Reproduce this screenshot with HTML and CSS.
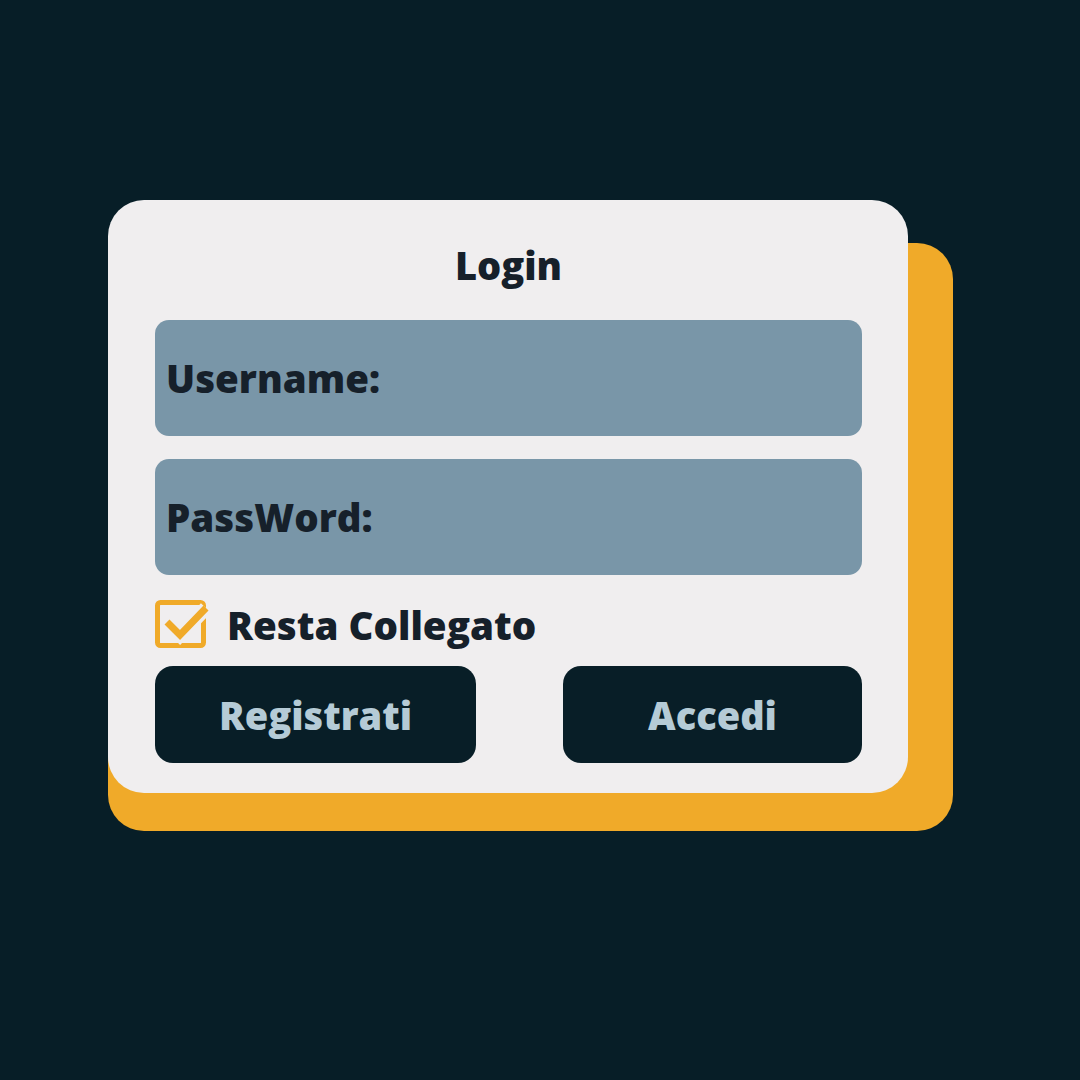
FILE: index.html
```html
<!DOCTYPE html>
<html lang="it">
<head>
<meta charset="utf-8">
<title>Login</title>
<link rel="stylesheet" href="styles.css">
</head>
<body>
<main class="stage">
  <div class="card-wrap">
    <section class="card">
      <h1 class="title">Login</h1>
      <div class="field"><span class="label">Username:</span></div>
      <div class="field"><span class="label">PassWord:</span></div>
      <label class="remember">
        <svg class="check" width="54" height="50" viewBox="0 0 54 50" aria-hidden="true">
          <rect x="2.5" y="2.5" width="46" height="43" rx="3" fill="none" stroke="#f0aa29" stroke-width="5"/>
          <path d="M12 22 L25 35 L51 8" fill="none" stroke="#f0eeef" stroke-width="14" stroke-linejoin="miter"/>
          <path d="M12 22 L25 35 L51 8" fill="none" stroke="#f0aa29" stroke-width="7" stroke-linejoin="miter"/>
        </svg>
        <span class="remember-text">Resta Collegato</span>
      </label>
      <div class="actions">
        <button class="btn btn-register">Registrati</button>
        <button class="btn btn-login">Accedi</button>
      </div>
    </section>
  </div>
</main>
</body>
</html>
```
FILE: styles.css
```css
html, body {
  margin: 0;
  padding: 0;
}
body {
  background: #071e27;
  width: 1080px;
  height: 1080px;
  font-family: "Open Sans", "Liberation Sans", sans-serif;
  overflow: hidden;
}
.stage {
  padding: 200px 0 0 108px;
}
.card-wrap {
  position: relative;
  width: 800px;
}
.card-wrap::before {
  content: "";
  position: absolute;
  left: 0;
  top: 43px;
  width: 845px;
  height: 588px;
  background: #f0aa29;
  border-radius: 36px;
}
.card {
  position: relative;
  box-sizing: border-box;
  width: 800px;
  height: 593px;
  background: #f0eeef;
  border-radius: 36px;
  padding: 0 46px 0 47px;
  display: flex;
  flex-direction: column;
}
.title {
  margin: 0;
  height: 120px;
  box-sizing: border-box;
  padding-top: 46px;
  line-height: 1;
  font-size: 38px;
  font-weight: 800;
  text-align: center;
  color: #16202a;
}
.field {
  height: 116px;
  background: #7996a8;
  border-radius: 14px;
  display: flex;
  align-items: center;
  padding-left: 11px;
  margin-bottom: 23px;
}
.label {
  font-size: 38.5px;
  font-weight: 800;
  color: #16202a;
}
.remember {
  display: flex;
  align-items: center;
  height: 50px;
  margin-top: 2px;
  gap: 18px;
}
.check {
  display: block;
  flex: none;
}
.remember-text {
  font-size: 38.5px;
  font-weight: 800;
  color: #16202a;
}
.actions {
  display: flex;
  justify-content: space-between;
  margin-top: 16px;
}
.btn {
  height: 97px;
  border: none;
  border-radius: 18px;
  background: #081e27;
  color: #b5cbd6;
  font-family: "Open Sans", "Liberation Sans", sans-serif;
  font-size: 38px;
  font-weight: 800;
  padding: 0;
  cursor: pointer;
}
.btn-register {
  width: 321px;
}
.btn-login {
  width: 299px;
}
```
